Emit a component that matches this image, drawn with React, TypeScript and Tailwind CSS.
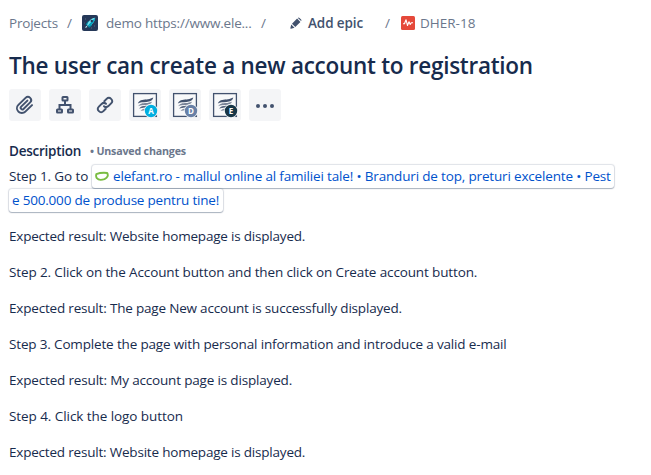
import type { ReactNode } from "react";

const steps = [
  { text: "Expected result: Website homepage is displayed.", tracking: "tracking-[-0.2px]" },
  { text: "Step 2. Click on the Account button and then click on Create account button.", tracking: "tracking-[-0.13px]" },
  { text: "Expected result: The page New account is successfully displayed.", tracking: "tracking-[-0.19px]" },
  { text: "Step 3. Complete the page with personal information and introduce a valid e-mail", tracking: "tracking-[-0.16px]" },
  { text: "Expected result: My account page is displayed.", tracking: "tracking-[-0.17px]" },
  { text: "Step 4. Click the logo button", tracking: "tracking-[-0.07px]" },
  { text: "Expected result: Website homepage is displayed.", tracking: "tracking-[-0.2px]" },
];

function Tool({ label, children }: { label: string; children: ReactNode }) {
  return (
    <button aria-label={label} className="flex size-8 items-center justify-center rounded-[3px] bg-[#f4f5f7] text-[#42526e]">
      {children}
    </button>
  );
}

function WingIcon({ letter, color }: { letter: string; color: string }) {
  return (
    <svg width="28" height="28" viewBox="0 0 28 28">
      <rect x="2.6" y="2.6" width="22.8" height="22.8" fill="#f8f9fa" stroke="#42526e" strokeWidth="1.3" />
      <path d="M6.8 12.4C9 8 13 9 17 8.3C19 8 20.5 7.3 22.3 6.5C21.6 9.6 19 10.5 15.5 10.9C12 11.2 9 10.8 6.8 12.4Z" fill="#42526e" />
      <path d="M7.2 15.3C9.5 11.2 13 12.3 16.5 11.9C18.5 11.7 20 11.2 21.2 10.6C20 13.4 17.5 13.8 14.5 14C11.8 14.2 9.3 14 7.2 15.3Z" fill="#7a8599" />
      <path d="M8.2 17.6C10.5 14.2 13.5 15.4 17 14.6C15.8 17 13.5 16.7 11.5 16.9C10 17 9.2 17.1 8.2 17.6Z" fill="#596780" />
      <path d="M9.6 20C11 17.3 13 18 15.2 17.4C14.2 20 12 19.2 9.6 20Z" fill="#8993a4" />
      <circle cx="20" cy="20" r="7" fill="#f8f9fa" />
      <circle cx="20" cy="20" r="6.2" fill={color} />
      <text x="20" y="22.9" textAnchor="middle" fontSize="8" fontWeight="700" fill="#fff">{letter}</text>
    </svg>
  );
}

export default function App() {
  return (
    <main className="h-[475px] w-[651px] overflow-hidden bg-white pl-[9px] font-['Open_Sans','Noto_Sans',sans-serif] text-[13.5px] text-[#172b4d]">
      <nav className="flex h-[46px] items-center whitespace-nowrap text-[#6b778c]">
        <span className="w-[58px] tracking-[-0.2px]">Projects</span>
        <span className="w-[15px]">/</span>
        <svg width="16" height="16" viewBox="0 0 16 16" className="mr-2">
          <rect width="16" height="16" rx="2" fill="#253858" />
          <path d="M3.5 9.5L6 6.3H8L5.2 10.5ZM6 11L10 8.7V10.4L7 13Z" fill="#00829b" />
          <path d="M5 10.2C6 6.5 9 3.2 13.2 2.7C12.8 7 9.5 10 6.4 11.3Z" fill="#79e2f2" />
          <path d="M5.7 10.8C8 8 10.5 5.5 13.2 2.7C12.8 7 9.5 10 6.4 11.3Z" fill="#00a3bf" />
          <circle cx="9.8" cy="6" r="1.2" fill="#253858" />
          <path d="M3 13L4.3 10.8L5.5 12Z" fill="#c1f1f5" />
          <path d="M3 4H4M12 11H13M9 13H10M2 8H2.7" stroke="#7a869a" strokeWidth=".6" />
        </svg>
        <span className="w-[155px] tracking-[-0.2px]">demo https://www.ele...</span>
        <span className="w-[29px]">/</span>
        <svg width="12" height="12" viewBox="0 0 12 12" className="mr-[6px]" fill="#42526e">
          <path d="M1.2 7.5L4.5 10.8L1 11.8Q.2 12 .4 11.1ZM2 6.7L7.1 1.6L10.4 4.9L5.3 10ZM7.9.9Q8.7.1 9.5.9L11.1 2.5Q11.9 3.3 11.1 4.1L7.9.9Z" />
        </svg>
        <span className="w-[77px] font-semibold tracking-[-0.1px] text-[#42526e]">Add epic</span>
        <span className="w-4">/</span>
        <svg width="14" height="14" viewBox="0 0 14 14" className="mr-[5px]">
          <rect width="14" height="14" rx="1.5" fill="#e5493a" />
          <path d="M2 7.8H3.5L5 3.7L6.5 9.5L8 5.7L9.2 8.5L10.3 6.8H12" fill="none" stroke="#fff" strokeWidth="1.1" strokeLinejoin="round" />
        </svg>
        <span>DHER-18</span>
      </nav>
      <h1 className="h-[43px] whitespace-nowrap text-[22.5px] leading-[39px] font-semibold tracking-[-0.27px]">The user can create a new account to registration</h1>
      <div className="flex h-[50px] gap-2">
        <Tool label="Attach">
          <svg width="24" height="24" viewBox="0 0 24 24" fill="currentColor">
            <path d="M11.643 17.965c-1.53 1.495-4.016 1.496-5.542.004a3.773 3.773 0 01.002-5.412l7.147-6.985a2.316 2.316 0 013.233-.003c.893.873.895 2.282.004 3.153l-6.703 6.55a.653.653 0 01-.914-.008.62.62 0 010-.902l6.229-6.087a.941.941 0 000-1.353.995.995 0 00-1.384 0l-6.23 6.087a2.502 2.502 0 000 3.607 2.643 2.643 0 003.683.009l6.703-6.55a4.17 4.17 0 00-.003-5.859 4.276 4.276 0 00-6.002.003l-7.148 6.985a5.655 5.655 0 00-.001 8.118c2.29 2.239 6.015 2.238 8.308-.002l6.69-6.536a.942.942 0 000-1.353.995.995 0 00-1.384 0l-6.688 6.534z" />
          </svg>
        </Tool>
        <Tool label="Create child issue">
          <svg width="24" height="24" viewBox="0 0 24 24" fill="none" stroke="currentColor" strokeWidth="2">
            <rect x="9.5" y="4" width="5" height="3.5" rx=".5" /><rect x="4" y="16.5" width="5" height="3" rx=".5" /><rect x="15" y="16.5" width="5" height="3" rx=".5" />
            <path d="M12 8V12M6.5 16V12H17.5V16" />
          </svg>
        </Tool>
        <Tool label="Link issue">
          <svg width="24" height="24" viewBox="0 0 24 24" fill="none" stroke="currentColor" strokeWidth="2" strokeLinecap="round">
            <path d="M11.3 8.2L13.6 5.9Q15.9 3.6 18.1 5.9Q20.4 8.1 18.1 10.4L15.4 13.1Q13.2 15.1 11 13.2M12.7 15.8L10.4 18.1Q8.1 20.4 5.9 18.1Q3.6 15.9 5.9 13.6L8.6 10.9Q10.8 8.9 13 10.8" />
          </svg>
        </Tool>
        <Tool label="App A"><WingIcon letter="A" color="#00aee0" /></Tool>
        <Tool label="App D"><WingIcon letter="D" color="#6880a6" /></Tool>
        <Tool label="App E"><WingIcon letter="E" color="#173647" /></Tool>
        <Tool label="More">
          <svg width="20" height="6" viewBox="0 0 20 6" className="mt-px" fill="currentColor"><circle cx="3" cy="3" r="2" /><circle cx="10" cy="3" r="2" /><circle cx="17" cy="3" r="2" /></svg>
        </Tool>
      </div>
      <div className="flex h-[25px] items-center whitespace-nowrap">
        <h2 className="w-[81px] font-semibold tracking-[-0.25px]">Description</h2>
        <span className="text-[10.7px] font-bold tracking-[-0.2px] text-[#6b778c]">• Unsaved changes</span>
      </div>
      <section>
        <div className="flex h-6 items-center whitespace-nowrap">
          <span className="w-[83px] tracking-[-0.12px]">Step 1. Go to</span>
          <a className="flex h-[23px] w-[522px] items-center rounded-[3px] bg-white pl-[3px] text-[#0052cc] shadow-[0_1px_1px_rgba(9,30,66,0.25),0_0_1px_1px_rgba(9,30,66,0.13)]">
            <svg width="14" height="11" viewBox="0 0 14 11" className="mr-1"><path d="M1.3 3.2Q6 1.3 12.2 2Q14.2 5.8 9.5 8.1Q4.2 10 1.8 7.2Q.7 5.4 1.3 3.2Z" fill="none" stroke="#7abd42" strokeWidth="1.9" strokeLinejoin="round" /></svg>
            <span className="tracking-[-0.165px]">elefant.ro - mallul online al familiei tale! • Branduri de top, preturi excelente • Pest</span>
          </a>
        </div>
        <div className="flex h-6 items-center whitespace-nowrap">
          <a className="flex h-[23px] w-[214px] items-center rounded-[3px] bg-white pl-[3px] tracking-[-0.2px] text-[#0052cc] shadow-[0_1px_1px_rgba(9,30,66,0.25),0_0_1px_1px_rgba(9,30,66,0.13)]">e 500.000 de produse pentru tine!</a>
        </div>
        {steps.map(({ text, tracking }, index) => <p key={index} className={`mt-3 h-6 whitespace-nowrap leading-6 ${tracking}`}>{text}</p>)}
      </section>
    </main>
  );
}
